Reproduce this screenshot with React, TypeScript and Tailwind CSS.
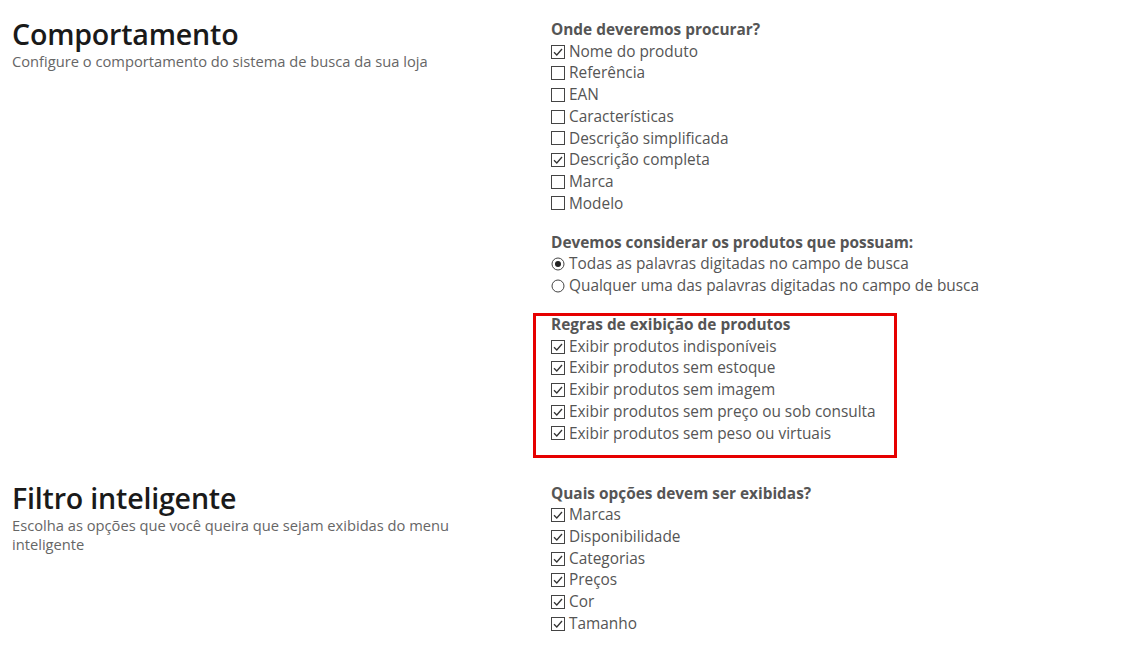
import type { ReactNode } from "react"

type Opt = { label: string; checked: boolean }

const onde: Opt[] = [
  { label: "Nome do produto", checked: true },
  { label: "Referência", checked: false },
  { label: "EAN", checked: false },
  { label: "Características", checked: false },
  { label: "Descrição simplificada", checked: false },
  { label: "Descrição completa", checked: true },
  { label: "Marca", checked: false },
  { label: "Modelo", checked: false },
]

const regras = [
  "Exibir produtos indisponíveis",
  "Exibir produtos sem estoque",
  "Exibir produtos sem imagem",
  "Exibir produtos sem preço ou sob consulta",
  "Exibir produtos sem peso ou virtuais",
]

const filtros = ["Marcas", "Disponibilidade", "Categorias", "Preços", "Cor", "Tamanho"]

function CheckBox({ checked }: { checked: boolean }) {
  return (
    <svg width="14" height="14" viewBox="0 0 14 14" className="shrink-0">
      <rect x="0.5" y="0.5" width="13" height="13" fill="white" stroke="#444" strokeWidth="1" />
      {checked && <path d="M3 7.2 L5.8 10 L11 4" fill="none" stroke="#333" strokeWidth="1.3" />}
    </svg>
  )
}

function Radio({ checked }: { checked: boolean }) {
  return (
    <svg width="14" height="14" viewBox="0 0 14 14" className="shrink-0">
      <circle cx="7" cy="7" r="6" fill="white" stroke="#444" strokeWidth="1" />
      {checked && <circle cx="7" cy="7" r="3" fill="#222" />}
    </svg>
  )
}

function Row({ icon, children }: { icon: ReactNode; children: ReactNode }) {
  return (
    <div className="flex items-center gap-[4px] leading-[21.7px] text-[15.4px] text-[#555]">
      {icon}
      <span>{children}</span>
    </div>
  )
}

function Group({ title, children }: { title: string; children: ReactNode }) {
  return (
    <div className="mb-[17.3px]">
      <div className="text-[15.4px] leading-[21.7px] font-bold text-[#555]">{title}</div>
      {children}
    </div>
  )
}

function Section({ title, desc, children }: { title: string; desc: string; children: ReactNode }) {
  return (
    <div className="flex">
      <div className="w-[551px] shrink-0 pl-3">
        <h2 className="text-[28.6px] leading-[29px] font-semibold text-[#1a1a1a] tracking-[-0.2px]">{title}</h2>
        <p className="mt-[4px] w-[480px] text-[14.7px] leading-[19px] text-[#666]">{desc}</p>
      </div>
      <div className="flex-1">{children}</div>
    </div>
  )
}

export default function App() {
  return (
    <div className="min-h-[665px] bg-white pt-[19px]" style={{ fontFamily: '"Open Sans", sans-serif' }}>
      <Section title="Comportamento" desc="Configure o comportamento do sistema de busca da sua loja">
        <Group title="Onde deveremos procurar?">
          {onde.map((o) => (
            <Row key={o.label} icon={<CheckBox checked={o.checked} />}>
              {o.label}
            </Row>
          ))}
        </Group>
        <Group title="Devemos considerar os produtos que possuam:">
          <Row icon={<Radio checked />}>Todas as palavras digitadas no campo de busca</Row>
          <Row icon={<Radio checked={false} />}>Qualquer uma das palavras digitadas no campo de busca</Row>
        </Group>
        <div className="relative">
          <Group title="Regras de exibição de produtos">
            {regras.map((r) => (
              <Row key={r} icon={<CheckBox checked />}>
                {r}
              </Row>
            ))}
          </Group>
          <div className="pointer-events-none absolute left-[-18px] top-[-1px] h-[145px] w-[364px] border-[3px] border-[#e60000]" />
        </div>
      </Section>
      <div className="h-[21px]" />
      <Section title="Filtro inteligente" desc="Escolha as opções que você queira que sejam exibidas do menu inteligente">
        <Group title="Quais opções devem ser exibidas?">
          {filtros.map((f) => (
            <Row key={f} icon={<CheckBox checked />}>
              {f}
            </Row>
          ))}
        </Group>
      </Section>
    </div>
  )
}
